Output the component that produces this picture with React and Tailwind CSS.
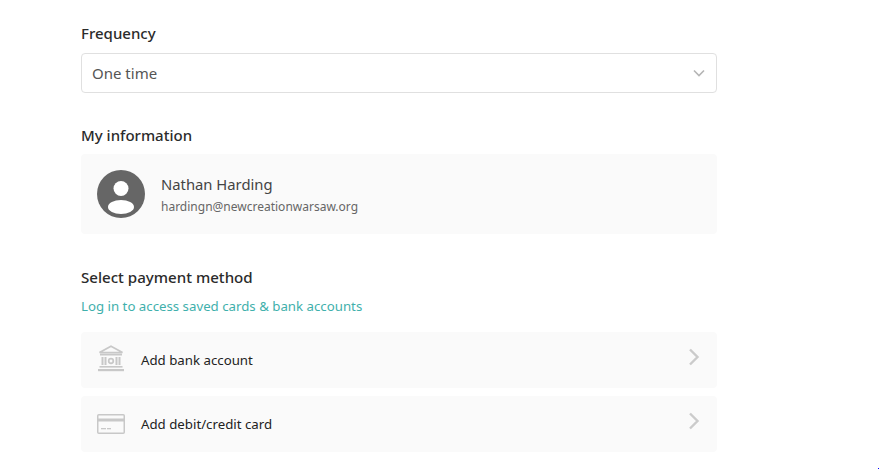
const font = { fontFamily: '"Noto Sans", sans-serif' };

function Bank() {
  return (
    <svg width="28" height="27" viewBox="0 0 28 27" fill="none" className="-mt-[4px] text-[#c8c8c8]">
      <path d="M14 1.2 L25.5 7.5 H2.5 Z" stroke="currentColor" strokeWidth="1.7" fill="none" />
      <rect x="3" y="8.5" width="22" height="2" fill="currentColor" />
      <rect x="4.5" y="12" width="2" height="8" fill="currentColor" />
      <rect x="7.5" y="12" width="2" height="8" fill="currentColor" />
      <circle cx="14" cy="16" r="2.3" stroke="currentColor" strokeWidth="1.7" />
      <rect x="18.5" y="12" width="2" height="8" fill="currentColor" />
      <rect x="21.5" y="12" width="2" height="8" fill="currentColor" />
      <rect x="2.5" y="21" width="23" height="1.6" fill="currentColor" />
      <rect x="1" y="24" width="26" height="2.2" fill="currentColor" />
    </svg>
  );
}

function Card() {
  return (
    <svg width="28" height="20" viewBox="0 0 28 20" fill="none" className="-mt-[1px] text-[#c8c8c8]">
      <rect x="0.75" y="0.75" width="26.5" height="18.5" rx="1" stroke="currentColor" strokeWidth="1.5" />
      <rect x="1" y="4.5" width="26" height="3" fill="currentColor" />
      <rect x="4" y="14" width="5" height="1.3" fill="currentColor" />
      <rect x="10" y="14" width="4" height="1.3" fill="currentColor" />
    </svg>
  );
}

function Chevron() {
  return (
    <svg width="12" height="18" viewBox="0 0 12 18" fill="none" className="-mt-[6px] translate-x-[1px]">
      <path d="M2 1.5 L9.5 9 L2 16.5" stroke="#cbcbcb" strokeWidth="2.4" />
    </svg>
  );
}

function Row({ icon, label }) {
  return (
    <div className="flex h-14 items-center rounded bg-[#fafafa] pl-4 pr-[18px]">
      <div className="flex w-7 justify-center">{icon}</div>
      <span className="ml-4 mt-[2px] flex-1 text-[13.25px] text-[#222]">{label}</span>
      <Chevron />
    </div>
  );
}

export default function App() {
  return (
    <div className="relative h-[470px] w-[880px] overflow-hidden bg-white" style={font}>
      <div className="ml-[81px] flex w-[636px] flex-col pt-[23px]">
        <h2 className="text-[15px] leading-[20px] font-medium text-[#2b2b2b]">Frequency</h2>
        <div className="mt-[10px] flex h-10 items-center justify-between rounded border border-[#e0e0e0] pl-[10px] pr-[11px]">
          <span className="text-[15px] text-[#555]">One time</span>
          <svg width="12" height="8" viewBox="0 0 12 8" fill="none">
            <path d="M1 1.5 L6 6.5 L11 1.5" stroke="#b5b5b5" strokeWidth="1.6" />
          </svg>
        </div>

        <h2 className="mt-[32px] text-[15px] leading-[20px] font-medium text-[#2b2b2b]">My information</h2>
        <div className="mt-[9px] flex h-20 items-center gap-4 rounded bg-[#fafafa] pl-4">
          <svg width="48" height="48" viewBox="0 0 48 48">
            <circle cx="24" cy="24" r="24" fill="#666" />
            <circle cx="24" cy="18.5" r="7.5" fill="#fff" />
            <ellipse cx="24" cy="37" rx="13" ry="7" fill="#fff" />
          </svg>
          <div className="flex flex-col">
            <span className="text-[14.8px] leading-[22px] text-[#444]">Nathan Harding</span>
            <span className="mt-[3px] text-[12px] leading-[18px] text-[#666]">hardingn@newcreationwarsaw.org</span>
          </div>
        </div>

        <h2 className="mt-[33px] text-[15.1px] leading-[20px] font-medium text-[#2b2b2b]">Select payment method</h2>
        <a className="mt-[9px] text-[13.25px] leading-[20px] text-[#3fb0ac]">Log in to access saved cards &amp; bank accounts</a>
        <div className="mt-4 flex flex-col gap-2">
          <Row icon={<Bank />} label="Add bank account" />
          <Row icon={<Card />} label="Add debit/credit card" />
        </div>
      </div>
      <div className="absolute left-[878px] top-[468px] h-px w-px bg-[#0000ff]" />
    </div>
  );
}
